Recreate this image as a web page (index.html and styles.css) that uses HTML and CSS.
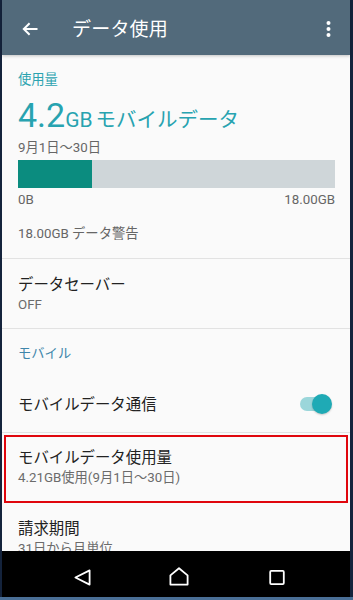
FILE: index.html
```html
<!DOCTYPE html>
<html lang="ja">
<head>
<meta charset="utf-8">
<link rel="stylesheet" href="styles.css">
</head>
<body>
<div class="frame">
  <div class="screen">
    <header class="appbar">
      <svg class="icon-back" width="16" height="14" viewBox="0 0 16 14"><path d="M15.5 7H1.8M7.6 1.2L1.8 7l5.8 5.8" fill="none" stroke="#fff" stroke-width="2"/></svg>
      <h1 class="title">データ使用</h1>
      <svg class="icon-more" width="5" height="16" viewBox="0 0 5 16"><circle cx="2.5" cy="2" r="2" fill="#fff"/><circle cx="2.5" cy="8" r="2" fill="#fff"/><circle cx="2.5" cy="14" r="2" fill="#fff"/></svg>
    </header>
    <main class="content">
      <section class="usage">
        <div class="label-accent">使用量</div>
        <div class="big"><span class="num">4.2</span><span class="unit">GB</span><span class="kind">モバイルデータ</span></div>
        <div class="period">9月1日～30日</div>
        <div class="bar"><div class="fill" style="width:23.3%"></div></div>
        <div class="bar-labels"><span>0B</span><span>18.00GB</span></div>
        <div class="warn">18.00GB データ警告</div>
      </section>
      <section class="item saver">
        <div class="item-title">データセーバー</div>
        <div class="item-sub">OFF</div>
      </section>
      <section class="group">
        <div class="group-title">モバイル</div>
        <div class="switch-row">
          <div class="item-title">モバイルデータ通信</div>
          <div class="toggle"><div class="track"></div><div class="thumb"></div></div>
        </div>
        <div class="item highlight">
          <div class="item-title">モバイルデータ使用量</div>
          <div class="item-sub">4.21GB使用(9月1日～30日)</div>
        </div>
        <div class="item billing">
          <div class="item-title">請求期間</div>
          <div class="item-sub">31日から月単位</div>
        </div>
      </section>
    </main>
    <nav class="navbar">
      <svg class="nav-back" width="17" height="17" viewBox="0 0 17 17"><path d="M15.6 1.4V15.6L1.4 8.5Z" fill="none" stroke="#fff" stroke-width="1.8" stroke-linejoin="round"/></svg>
      <svg class="nav-home" width="20" height="19" viewBox="0 0 20 19"><path d="M1.4 8.4L10 1.3L18.6 8.4V17.6H1.4Z" fill="none" stroke="#fff" stroke-width="1.8" stroke-linejoin="round"/></svg>
      <svg class="nav-recent" width="16" height="15" viewBox="0 0 16 15"><rect x="1.2" y="0.9" width="13.6" height="13.2" rx="1" fill="none" stroke="#fff" stroke-width="1.8"/></svg>
    </nav>
  </div>
</div>
</body>
</html>
```

FILE: styles.css
```css
html, body {
  margin: 0;
  padding: 0;
  height: 600px;
  overflow: hidden;
}
body {
  background: #14233c;
  font-family: Roboto, "Noto Sans CJK JP", sans-serif;
}
.frame {
  height: 600px;
  box-sizing: border-box;
  padding: 0 3px 3px 2px;
  background: linear-gradient(to top, #4a6f96 0, #4a6f96 3px, #14233c 3px);
}
.screen {
  height: 597px;
  display: flex;
  flex-direction: column;
  background: #fafafa;
}
.appbar {
  height: 55px;
  flex: none;
  background: #526a7b;
  display: flex;
  align-items: center;
  box-shadow: 0 1px 3px rgba(0,0,0,0.22);
  position: relative;
  z-index: 1;
}
.icon-back {
  margin-left: 20px;
  margin-top: 3px;
}
.title {
  margin: 0 0 0 34px;
  font-size: 19px;
  font-weight: 400;
  color: #fff;
  flex: 1;
  letter-spacing: 0.2px;
}
.icon-more {
  margin-right: 19px;
  margin-top: 2px;
}
.content {
  flex: 1;
  overflow: hidden;
}
.usage {
  padding: 16px 15px 0 16px;
  height: 204px;
  box-sizing: border-box;
  border-bottom: 1px solid #e2e2e2;
}
.label-accent {
  font-size: 13.3px;
  line-height: 18px;
  color: #2ba3b0;
}
.big {
  color: #27a3b0;
  font-size: 34px;
  line-height: 40px;
  height: 40px;
  margin-top: 6px;
  white-space: nowrap;
}
.unit {
  font-size: 21px;
  line-height: 1;
}
.kind {
  font-size: 20.5px;
  line-height: 1;
  margin-left: 3px;
}
.period {
  font-size: 13.3px;
  line-height: 18px;
  color: #666;
  margin-top: 4px;
}
.bar {
  margin-top: 3px;
  height: 28px;
  background: #cfd6d9;
}
.fill {
  height: 100%;
  background: #0b8c7f;
}
.bar-labels {
  display: flex;
  justify-content: space-between;
  font-size: 13.3px;
  line-height: 18px;
  color: #666;
  margin-top: 3px;
}
.warn {
  font-size: 13.3px;
  line-height: 18px;
  color: #666;
  margin-top: 16px;
}
.item {
  padding: 0 16px;
  box-sizing: border-box;
}
.item-title {
  font-size: 15.4px;
  line-height: 22px;
  color: #222;
}
.item-sub {
  font-size: 13.3px;
  line-height: 18px;
  color: #6b6b6b;
}
.saver {
  height: 70px;
  padding-top: 15px;
  border-bottom: 1px solid #e2e2e2;
}
.group-title {
  padding: 16px 16px 0;
  font-size: 13.3px;
  line-height: 18px;
  color: #3f86ab;
}
.switch-row {
  height: 70px;
  box-sizing: border-box;
  padding: 15px 18px 0 16px;
  display: flex;
  align-items: center;
  justify-content: space-between;
  border-bottom: 1px solid #e2e2e2;
}
.toggle {
  position: relative;
  width: 32px;
  height: 20px;
  margin-top: -2px;
}
.track {
  position: absolute;
  left: 0;
  width: 30px;
  top: 3px;
  height: 14px;
  border-radius: 7px;
  background: #9bd6da;
}
.thumb {
  position: absolute;
  right: 0;
  top: 0;
  width: 20px;
  height: 20px;
  border-radius: 50%;
  background: #1faab5;
  box-shadow: 0 1px 2px rgba(0,0,0,0.2);
}
.highlight {
  margin: 2px 2px 0 2px;
  height: 68px;
  border: 2px solid #e0060d;
  padding: 10px 0 0 12px;
}
.billing {
  padding-top: 15px;
}
.navbar {
  height: 46px;
  flex: none;
  background: #000;
  display: flex;
  align-items: center;
  padding-left: 72px;
}
.nav-back {
  margin-top: 6px;
}
.nav-home {
  margin-left: 78px;
  margin-top: 4px;
}
.nav-recent {
  margin-left: 80px;
  margin-top: 6px;
}
```
